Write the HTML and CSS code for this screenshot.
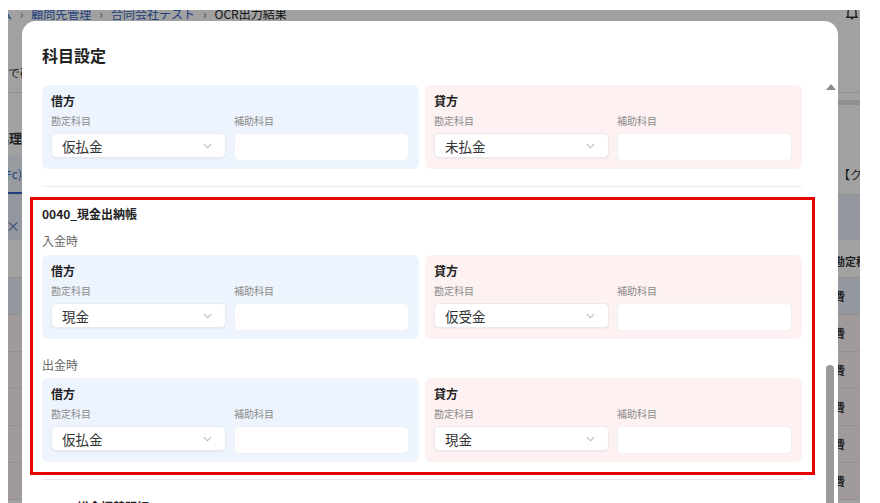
FILE: index.html
```html
<!DOCTYPE html>
<html lang="ja">
<head>
    <meta charset="UTF-8">
    <meta name="viewport" content="width=device-width, initial-scale=1.0">
    <title>OCR出力結果 - 科目設定</title>
    <link rel="stylesheet" href="styles.css">
</head>
<body>
    <div class="screen">
        <!-- page behind the dialog -->
        <div class="app">
            <nav class="crumbs">
                <a href="#">ホーム</a>
                <span class="sep">›</span>
                <a href="#">顧問先管理</a>
                <span class="sep">›</span>
                <a href="#">合同会社テスト</a>
                <span class="sep">›</span>
                <span class="current">OCR出力結果</span>
                <svg class="bell" viewBox="0 0 12 14" fill="none" stroke="#333" stroke-width="1.4">
                    <path d="M2 10V6a4 4 0 0 1 8 0v4l1 1.2H1z"/>
                    <path d="M4.8 12.6h2.4"/>
                </svg>
            </nav>

            <div class="row intro">
                <div class="edge-l lead"><span>ここで確認</span></div>
                <div class="edge-r"></div>
            </div>
            <div class="row heading">
                <div class="edge-l"><span>OCR処理</span></div>
                <div class="edge-r"><span class="rule"></span></div>
            </div>
            <div class="row tabs">
                <div class="edge-l tab-active"><span>(全件c)</span></div>
                <div class="edge-r"><span>【クレジット】</span></div>
            </div>
            <div class="row filter">
                <div class="edge-l"><span class="chip-x">×</span></div>
                <div class="edge-r"></div>
            </div>
            <div class="row thead">
                <div class="edge-l"></div>
                <div class="edge-r"><span class="cut-l">勘定科目</span></div>
            </div>
            <div class="row trow picked">
                <div class="edge-l"></div>
                <div class="edge-r"><span class="cut-l">費</span></div>
            </div>
            <div class="row trow">
                <div class="edge-l"></div>
                <div class="edge-r"><span class="cut-l">費</span></div>
            </div>
            <div class="row trow">
                <div class="edge-l"></div>
                <div class="edge-r"><span class="cut-l">費</span></div>
            </div>
            <div class="row trow">
                <div class="edge-l"></div>
                <div class="edge-r"><span class="cut-l">費</span></div>
            </div>
            <div class="row trow">
                <div class="edge-l"></div>
                <div class="edge-r"><span class="cut-l">費</span></div>
            </div>
            <div class="row trow">
                <div class="edge-l"></div>
                <div class="edge-r"><span class="cut-l">費</span></div>
            </div>
        </div>
        <div class="backdrop"></div>

        <!-- 科目設定 dialog -->
        <div class="modal">
            <h2 class="modal-title">科目設定</h2>
            <div class="modal-body">
                <div class="books">

                    <div class="book tail">
                        <div class="pair">
                            <div class="side debit">
                                <div class="side-title">借方</div>
                                <div class="fields">
                                    <div class="field">
                                        <label>勘定科目</label>
                                        <div class="select"><span>仮払金</span><svg viewBox="0 0 10 6"><path d="M1 1l4 4 4-4"/></svg></div>
                                    </div>
                                    <div class="field">
                                        <label>補助科目</label>
                                        <input class="text-input" type="text">
                                    </div>
                                </div>
                            </div>
                            <div class="side credit">
                                <div class="side-title">貸方</div>
                                <div class="fields">
                                    <div class="field">
                                        <label>勘定科目</label>
                                        <div class="select"><span>未払金</span><svg viewBox="0 0 10 6"><path d="M1 1l4 4 4-4"/></svg></div>
                                    </div>
                                    <div class="field">
                                        <label>補助科目</label>
                                        <input class="text-input" type="text">
                                    </div>
                                </div>
                            </div>
                        </div>
                    </div>

                    <div class="book">
                        <div class="mark">
                            <h4 class="book-name">0040_現金出納帳</h4>

                            <div class="timing">入金時</div>
                            <div class="pair">
                                <div class="side debit">
                                    <div class="side-title">借方</div>
                                    <div class="fields">
                                        <div class="field">
                                            <label>勘定科目</label>
                                            <div class="select"><span>現金</span><svg viewBox="0 0 10 6"><path d="M1 1l4 4 4-4"/></svg></div>
                                        </div>
                                        <div class="field">
                                            <label>補助科目</label>
                                            <input class="text-input" type="text">
                                        </div>
                                    </div>
                                </div>
                                <div class="side credit">
                                    <div class="side-title">貸方</div>
                                    <div class="fields">
                                        <div class="field">
                                            <label>勘定科目</label>
                                            <div class="select"><span>仮受金</span><svg viewBox="0 0 10 6"><path d="M1 1l4 4 4-4"/></svg></div>
                                        </div>
                                        <div class="field">
                                            <label>補助科目</label>
                                            <input class="text-input" type="text">
                                        </div>
                                    </div>
                                </div>
                            </div>

                            <div class="timing">出金時</div>
                            <div class="pair">
                                <div class="side debit">
                                    <div class="side-title">借方</div>
                                    <div class="fields">
                                        <div class="field">
                                            <label>勘定科目</label>
                                            <div class="select"><span>仮払金</span><svg viewBox="0 0 10 6"><path d="M1 1l4 4 4-4"/></svg></div>
                                        </div>
                                        <div class="field">
                                            <label>補助科目</label>
                                            <input class="text-input" type="text">
                                        </div>
                                    </div>
                                </div>
                                <div class="side credit">
                                    <div class="side-title">貸方</div>
                                    <div class="fields">
                                        <div class="field">
                                            <label>勘定科目</label>
                                            <div class="select"><span>現金</span><svg viewBox="0 0 10 6"><path d="M1 1l4 4 4-4"/></svg></div>
                                        </div>
                                        <div class="field">
                                            <label>補助科目</label>
                                            <input class="text-input" type="text">
                                        </div>
                                    </div>
                                </div>
                            </div>
                        </div>
                    </div>

                    <div class="book">
                        <h4 class="book-name">0050_総合振替明細</h4>
                        <div class="timing">入金時</div>
                    </div>
                </div>

                <div class="scrollbar">
                    <div class="scroll-up"></div>
                    <div class="scroll-thumb"></div>
                </div>
            </div>
        </div>
    </div>
</body>
</html>
```

FILE: styles.css
```css
* {
    box-sizing: border-box;
}
html, body {
    height: 100%;
}
body {
    margin: 0;
    padding: 10px 20px 0 8px;
    background: #fff;
    overflow: hidden;
    font-family: "Noto Sans CJK JP", "Noto Sans", sans-serif;
    color: #222;
}
.screen {
    position: relative;
    height: 493px;
    overflow: hidden;
}

/* background page */
.app {
    height: 100%;
    background: #fff;
}
.crumbs {
    display: flex;
    align-items: flex-start;
    gap: 8px;
    height: 11px;
    margin-left: -32px;
    font-size: 12px;
    line-height: 14px;
}
.crumbs > * {
    margin-top: -3px;
}
.crumbs a {
    color: #2f64c8;
    text-decoration: none;
}
.crumbs .sep {
    color: #777;
}
.crumbs .current {
    color: #222;
}
.crumbs .bell {
    width: 12px;
    height: 14px;
    margin: -4px 2px 0 auto;
}
.row {
    display: flex;
    justify-content: space-between;
    font-size: 12px;
    line-height: 16px;
    color: #333;
}
.edge-l {
    width: 14px;
    display: flex;
    justify-content: flex-end;
    overflow: hidden;
    white-space: nowrap;
}
.edge-r {
    width: 22px;
    overflow: hidden;
    white-space: nowrap;
}
.edge-l.lead {
    justify-content: flex-start;
}
.edge-l.lead span {
    margin-left: -24px;
}
.cut-l {
    display: inline-block;
    margin-left: -4px;
}
.intro {
    height: 72px;
    align-items: flex-end;
    padding-bottom: 11px;
    border-bottom: 1px solid #e6e6e6;
}
.heading {
    height: 62px;
    align-items: flex-end;
    padding-bottom: 9px;
    font-size: 13px;
    font-weight: 700;
}
.heading .edge-r {
    align-self: flex-start;
}
.heading .rule {
    display: block;
    height: 5px;
    margin-top: 7px;
    background: #e2e2e2;
}
.tabs {
    height: 40px;
    align-items: center;
    border-bottom: 1px solid #e4e4e4;
}
.tabs .edge-l {
    height: 100%;
    align-items: center;
    background: #f1f5fc;
    border-bottom: 2px solid #2f64c8;
    color: #2f64c8;
}
.filter {
    height: 45px;
    align-items: center;
    background: #eaf0f9;
    padding-top: 14px;
    font-size: 14px;
}
.chip-x {
    color: #5b7bb5;
    margin-right: 2px;
}
.thead {
    height: 38px;
    align-items: flex-end;
    padding-bottom: 8px;
    border-bottom: 1px solid #e2e2e2;
    font-size: 11px;
    font-weight: 700;
}
.trow {
    height: 37px;
    align-items: center;
    background: #fdf4f4;
    border-bottom: 1px solid #eee4e4;
    font-size: 11px;
    font-weight: 700;
}
.trow.picked {
    background: #e9f0fb;
}
.backdrop {
    position: absolute;
    inset: 0;
    background: rgba(0, 0, 0, 0.37);
}

/* dialog */
.modal {
    position: absolute;
    left: 14px;
    top: 11px;
    width: 816px;
    height: 540px;
    padding: 22px 0 0 20px;
    background: #fff;
    border-radius: 14px;
}
.modal-title {
    margin: 0 0 13px;
    font-size: 16px;
    line-height: 24px;
    font-weight: 700;
    color: #222;
}
.modal-body {
    display: flex;
    gap: 22px;
}
.books {
    width: 760px;
}
.book {
    padding: 18px 0 17px;
    border-bottom: 1px solid #ececec;
}
.book.tail {
    padding-top: 5px;
}
.mark {
    margin: -8px -13px -13px -12px;
    padding: 5px 10px 10px 9px;
    border: 3px solid #e60000;
}
.book-name {
    margin: 0;
    font-size: 12px;
    line-height: 18px;
    font-weight: 700;
    color: #222;
}
.timing {
    margin: 9px 0 5px;
    font-size: 12px;
    line-height: 18px;
    color: #666;
}
.pair + .timing {
    margin: 17px 0 4px;
}
.pair {
    display: grid;
    grid-template-columns: 1fr 1fr;
    gap: 6px;
}
.side {
    padding: 7px 10px 8px 9px;
    border-radius: 6px;
}
.debit {
    background: #eef4fd;
}
.credit {
    background: #fdf1f1;
}
.side-title {
    font-size: 12px;
    line-height: 18px;
    font-weight: 700;
    color: #222;
}
.fields {
    display: grid;
    grid-template-columns: 1fr 1fr;
    gap: 8px;
    margin-top: 4px;
    align-items: start;
}
.field label {
    display: block;
    margin-bottom: 5px;
    font-size: 10px;
    line-height: 14px;
    color: #8a8a8a;
}
.select {
    display: flex;
    align-items: center;
    justify-content: space-between;
    height: 25px;
    padding: 0 13px 0 10px;
    background: #fff;
    border: 1px solid #e8eaee;
    border-radius: 5px;
    box-shadow: 0 1px 1px rgba(0, 0, 0, 0.04);
    font-size: 13.5px;
    color: #333;
}
.select svg {
    width: 9px;
    height: 6px;
    fill: none;
    stroke: #b8b8b8;
    stroke-width: 1.2;
}
.text-input {
    display: block;
    width: 100%;
    height: 28px;
    margin: 0;
    background: #fff;
    border: 1px solid #f0f1f4;
    border-radius: 5px;
}

/* dialog scrollbar */
.scrollbar {
    width: 14px;
    padding: 4px 0 0 2px;
}
.scroll-up {
    width: 0;
    height: 0;
    border-left: 5px solid transparent;
    border-right: 5px solid transparent;
    border-bottom: 6px solid #8c8c8c;
}
.scroll-thumb {
    width: 8px;
    height: 200px;
    margin-top: 275px;
    border-radius: 4px;
    background: #9a9a9a;
}
```
